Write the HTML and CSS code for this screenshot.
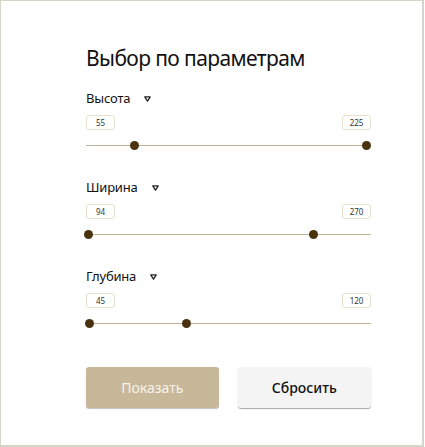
FILE: index.html
```html
<!DOCTYPE html>
<html lang="ru">
<head>
<meta charset="utf-8">
<link rel="stylesheet" href="styles.css">
</head>
<body>
<div class="frame">
  <div class="panel">
    <h1 class="title">Выбор по параметрам</h1>

    <div class="param">
      <div class="param-head"><span class="param-name">Высота</span><svg class="caret" width="7" height="6" viewBox="0 0 7 6"><path d="M0.8 0.9 H6.2 L3.5 5.2 Z" fill="none" stroke="#222" stroke-width="1.3" stroke-linejoin="round"/></svg></div>
      <div class="values"><span class="val">55</span><span class="val">225</span></div>
      <div class="slider"><span class="thumb" style="left:48px"></span><span class="thumb" style="left:280px"></span></div>
    </div>

    <div class="param">
      <div class="param-head"><span class="param-name">Ширина</span><svg class="caret" width="7" height="6" viewBox="0 0 7 6"><path d="M0.8 0.9 H6.2 L3.5 5.2 Z" fill="none" stroke="#222" stroke-width="1.3" stroke-linejoin="round"/></svg></div>
      <div class="values"><span class="val">94</span><span class="val">270</span></div>
      <div class="slider"><span class="thumb" style="left:2px"></span><span class="thumb" style="left:227px"></span></div>
    </div>

    <div class="param">
      <div class="param-head"><span class="param-name">Глубина</span><svg class="caret" width="7" height="6" viewBox="0 0 7 6"><path d="M0.8 0.9 H6.2 L3.5 5.2 Z" fill="none" stroke="#222" stroke-width="1.3" stroke-linejoin="round"/></svg></div>
      <div class="values"><span class="val">45</span><span class="val">120</span></div>
      <div class="slider"><span class="thumb" style="left:3px"></span><span class="thumb" style="left:100px"></span></div>
    </div>

    <div class="actions">
      <button class="btn btn-primary">Показать</button>
      <button class="btn btn-secondary">Сбросить</button>
    </div>
  </div>
</div>
</body>
</html>
```

FILE: styles.css
```css
* { box-sizing: border-box; }
html, body { margin: 0; padding: 0; background: #fff; }
body { font-family: "Noto Sans", "Open Sans", sans-serif; color: #111; }

.frame {
  width: 424px;
  height: 447px;
  border: 1px solid #d6d6c8;
  border-width: 1px 2px 2px 1px;
}

.panel {
  padding: 42px 0 0 85px;
  width: 370px;
}

.title {
  margin: 0;
  font-size: 21px;
  font-weight: 400;
  line-height: 30px;
  letter-spacing: -0.6px;
}

.param { margin-top: 16px; }
.param + .param { margin-top: 27px; }

.param-head {
  display: flex;
  align-items: center;
  gap: 14px;
  height: 18px;
}
.param-name { font-size: 13px; letter-spacing: -0.2px; }
.caret { margin-top: 2px; }

.values {
  display: flex;
  justify-content: space-between;
  margin-top: 8px;
  width: 285px;
}
.val {
  display: inline-flex;
  align-items: center;
  justify-content: center;
  width: 29px;
  height: 15px;
  border: 1px solid #e8dfcf;
  border-radius: 3px;
  font-size: 8px;
  color: #333;
}

.slider {
  position: relative;
  margin-top: 11px;
  width: 285px;
  height: 10px;
}
.slider::before {
  content: "";
  position: absolute;
  left: 0; right: 0; top: 4px;
  height: 1px;
  background: #c2b49b;
}
.thumb {
  position: absolute;
  top: 0;
  width: 9px;
  height: 9px;
  margin-left: -4px;
  border-radius: 50%;
  background: #4a3210;
}

.actions {
  display: flex;
  gap: 19px;
  margin-top: 38px;
}
.btn {
  width: 134px;
  height: 41px;
  border: none;
  border-radius: 3px;
  font-family: inherit;
  font-size: 14px;
}
.btn-primary {
  background: #c8b89a;
  color: #f7f3ea;
  box-shadow: 0 1px 1px rgba(0,0,0,0.25);
}
.btn-secondary {
  width: 135px;
  background: #f4f4f4;
  color: #111;
  font-weight: 500;
  box-shadow: 0 1px 1px rgba(0,0,0,0.35);
}
```
